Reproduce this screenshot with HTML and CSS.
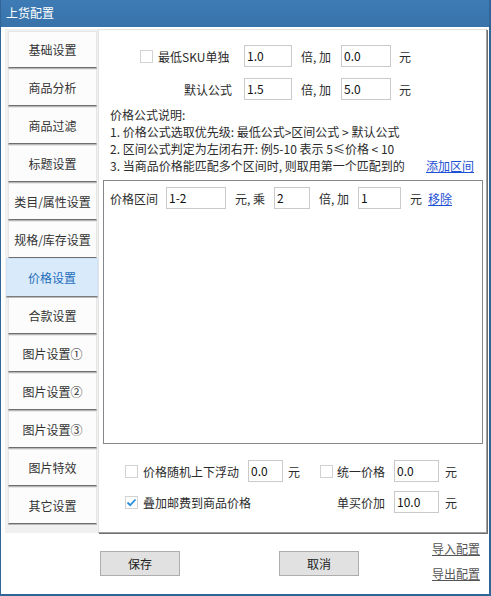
FILE: index.html
```html
<!DOCTYPE html>
<html>
<head>
    <meta charset="utf-8">
    <title>上货配置</title>
    <link rel="stylesheet" href="styles.css">
</head>
<body>
    <div class="window">
        <div class="titlebar">上货配置</div>

        <div class="main">
            <div class="tabs">
                <div class="tab">基础设置</div>
                <div class="tab">商品分析</div>
                <div class="tab">商品过滤</div>
                <div class="tab">标题设置</div>
                <div class="tab">类目/属性设置</div>
                <div class="tab">规格/库存设置</div>
                <div class="tab active">价格设置</div>
                <div class="tab">合款设置</div>
                <div class="tab">图片设置①</div>
                <div class="tab">图片设置②</div>
                <div class="tab">图片设置③</div>
                <div class="tab">图片特效</div>
                <div class="tab">其它设置</div>
            </div>

            <div class="panel">
                <div class="form-row">
                    <label class="row-label with-check"><span class="checkbox"></span>最低SKU单独</label>
                    <input type="text" class="field field-48" value="1.0">
                    <span class="unit">倍, 加</span>
                    <input type="text" class="field field-50" value="0.0">
                    <span class="unit-end">元</span>
                </div>
                <div class="form-row last">
                    <label class="row-label">默认公式</label>
                    <input type="text" class="field field-48" value="1.5">
                    <span class="unit">倍, 加</span>
                    <input type="text" class="field field-50" value="5.0">
                    <span class="unit-end">元</span>
                </div>

                <div class="notes">
                    <div>价格公式说明:</div>
                    <div>1. 价格公式选取优先级: 最低公式&gt;区间公式 &gt; 默认公式</div>
                    <div>2. 区间公式判定为左闭右开: 例5-10 表示 5≤价格 &lt; 10</div>
                    <div class="notes-last">
                        <span>3. 当商品价格能匹配多个区间时, 则取用第一个匹配到的</span>
                        <a href="#" class="link">添加区间</a>
                    </div>
                </div>

                <div class="ranges">
                    <div class="range-row">
                        <span class="range-label">价格区间</span>
                        <input type="text" class="field field-60" value="1-2">
                        <span class="range-unit">元, 乘</span>
                        <input type="text" class="field field-36" value="2">
                        <span class="range-unit">倍, 加</span>
                        <input type="text" class="field field-43" value="1">
                        <span class="range-unit">元</span>
                        <a href="#" class="link">移除</a>
                    </div>
                </div>

                <div class="extras">
                    <div class="extra-row">
                        <div class="col-left">
                            <span class="checkbox"></span>
                            <span class="extra-text">价格随机上下浮动</span>
                            <input type="text" class="field field-35" value="0.0">
                            <span class="extra-unit">元</span>
                        </div>
                        <div class="col-right">
                            <span class="checkbox"></span>
                            <span class="extra-label">统一价格</span>
                            <input type="text" class="field field-45" value="0.0">
                            <span class="extra-unit wide">元</span>
                        </div>
                    </div>
                    <div class="extra-row">
                        <div class="col-left">
                            <span class="checkbox checked">
                                <svg width="11" height="11" viewBox="0 0 11 11"><polyline points="1.5,5.5 4.2,8.2 9.5,2.5" fill="none" stroke="#2a8fd8" stroke-width="1.8"/></svg>
                            </span>
                            <span class="extra-text">叠加邮费到商品价格</span>
                        </div>
                        <div class="col-right">
                            <span class="checkbox-slot"></span>
                            <span class="extra-label">单买价加</span>
                            <input type="text" class="field field-45" value="10.0">
                            <span class="extra-unit wide">元</span>
                        </div>
                    </div>
                </div>
            </div>
        </div>

        <div class="footer">
            <button class="btn">保存</button>
            <button class="btn">取消</button>
            <div class="side-links">
                <a href="#" class="side-link">导入配置</a>
                <a href="#" class="side-link">导出配置</a>
            </div>
        </div>
    </div>
</body>
</html>
```

FILE: styles.css
```css
body {
    margin: 0;
    font-family: "Noto Sans CJK SC", "Microsoft YaHei", sans-serif;
    font-size: 12px;
    color: #2b2b2b;
    background: #fff;
}

.window {
    width: 491px;
    height: 596px;
    box-sizing: border-box;
    border-left: 1px solid #2f6597;
    border-right: 2px solid #2f6597;
    border-bottom: 2px solid #2f6597;
    display: flex;
    flex-direction: column;
    background: #fff;
}

.titlebar {
    height: 27px;
    line-height: 26px;
    padding-left: 5px;
    color: #fff;
    font-size: 12px;
    background: linear-gradient(#3e7bb4, #3873aa);
}

.main {
    display: flex;
    height: 504px;
    margin-top: 2px;
}

/* left tab column */
.tabs {
    width: 93px;
    margin-left: 4px;
    padding: 2px 0 0 3px;
    box-sizing: border-box;
    background: #f0f0f0;
}

.tab {
    width: 89px;
    height: 37px;
    margin-bottom: 1px;
    box-sizing: border-box;
    display: flex;
    align-items: center;
    justify-content: center;
    background: #fcfcfc;
    border: 1px solid #e6e6e6;
    border-bottom: 1px solid #6e6e6e;
    box-shadow: 0 1px 0 #b9b9b9;
    color: #333;
    white-space: nowrap;
}

.tab.active {
    width: 92px;
    height: 39px;
    margin: -1px 0 0 -2px;
    background: #d9eafb;
    border-color: #d0e2f5;
    border-bottom-color: #7d7d7d;
    color: #1e6dba;
    position: relative;
}

/* settings panel */
.panel {
    flex: 1;
    margin-right: 2px;
    padding-top: 15px;
    box-sizing: border-box;
    background: #fff;
    border-top: 1px solid #e3e3e3;
    border-left: 1px solid #e3e3e3;
    border-right: 1px solid #a0a0a0;
    border-bottom: 1px solid #a0a0a0;
    box-shadow: 1px 1px 0 #6f6f6f;
}

.form-row {
    display: flex;
    align-items: center;
    height: 22px;
    margin-bottom: 11px;
}

.form-row.last {
    margin-bottom: 6px;
}

.row-label {
    width: 135px;
    padding-right: 2px;
    margin-right: 10px;
    box-sizing: border-box;
    display: flex;
    align-items: center;
    justify-content: flex-end;
}

.row-label.with-check {
    justify-content: flex-start;
    padding-left: 41px;
}

.row-label .checkbox {
    margin-right: 5px;
}

.field {
    height: 22px;
    box-sizing: border-box;
    border: 1px solid #cacaca;
    padding: 0 2px 2px 2px;
    font-family: "Noto Sans CJK SC", "Microsoft YaHei", sans-serif;
    font-size: 12px;
    color: #111;
    background: #fff;
    outline: none;
}

.field-35 { width: 35px; }
.field-36 { width: 36px; }
.field-43 { width: 43px; }
.field-45 { width: 45px; }
.field-48 { width: 48px; }
.field-50 { width: 50px; }
.field-60 { width: 60px; }

.unit {
    margin: 0 10px 0 9px;
}

.unit-end {
    margin-left: 8px;
}

.notes {
    padding: 0 12px 0 11px;
    line-height: 17px;
}

.notes-last {
    display: flex;
    justify-content: space-between;
}

.link {
    color: #1d4fd3;
    text-decoration: underline;
}

.ranges {
    height: 264px;
    margin: 6px 3px 0 4px;
    padding: 6px 0 0 6px;
    box-sizing: border-box;
    border: 1px solid #84878c;
}

.range-row {
    display: flex;
    align-items: center;
    height: 22px;
}

.range-label {
    margin-right: 8px;
}

.range-unit {
    margin: 0 9px;
}

.range-row .range-unit:first-of-type {
    margin: 0 11px 0 8px;
}

.range-row .link {
    margin-left: -3px;
}

/* options under the range list */
.extras {
    margin-top: 16px;
    padding-left: 26px;
}

.extra-row {
    display: flex;
    align-items: center;
    height: 22px;
    margin-bottom: 9px;
}

.col-left {
    width: 195px;
    display: flex;
    align-items: center;
}

.col-right {
    display: flex;
    align-items: center;
}

.checkbox {
    width: 13px;
    height: 13px;
    box-sizing: border-box;
    border: 1px solid #d2d2d2;
    background: #fff;
    display: inline-flex;
    align-items: center;
    justify-content: center;
    flex-shrink: 0;
}

.checkbox-slot {
    width: 13px;
    flex-shrink: 0;
}

.col-left .checkbox {
    margin-right: 5px;
}

.col-right .checkbox,
.col-right .checkbox-slot {
    margin-right: 4px;
}

.extra-text {
    margin-right: 9px;
}

.extra-label {
    width: 48px;
    margin-right: 9px;
}

.extra-unit {
    margin-left: 5px;
}

.extra-unit.wide {
    margin-left: 6px;
}

/* bottom buttons */
.footer {
    flex: 1;
    display: flex;
    align-items: center;
    padding-left: 99px;
}

.btn {
    width: 80px;
    height: 25px;
    margin-right: 99px;
    background: #e1e1e1;
    border: 1px solid #adadad;
    font-family: "Noto Sans CJK SC", "Microsoft YaHei", sans-serif;
    font-size: 12px;
    color: #222;
    padding: 0;
}

.btn + .btn {
    margin-right: 0;
}

.side-links {
    margin-left: auto;
    margin-right: 9px;
    align-self: flex-start;
    padding-top: 7px;
    display: flex;
    flex-direction: column;
    gap: 8px;
    line-height: 17px;
}

.side-link {
    color: #555;
    text-decoration: underline;
}
```
